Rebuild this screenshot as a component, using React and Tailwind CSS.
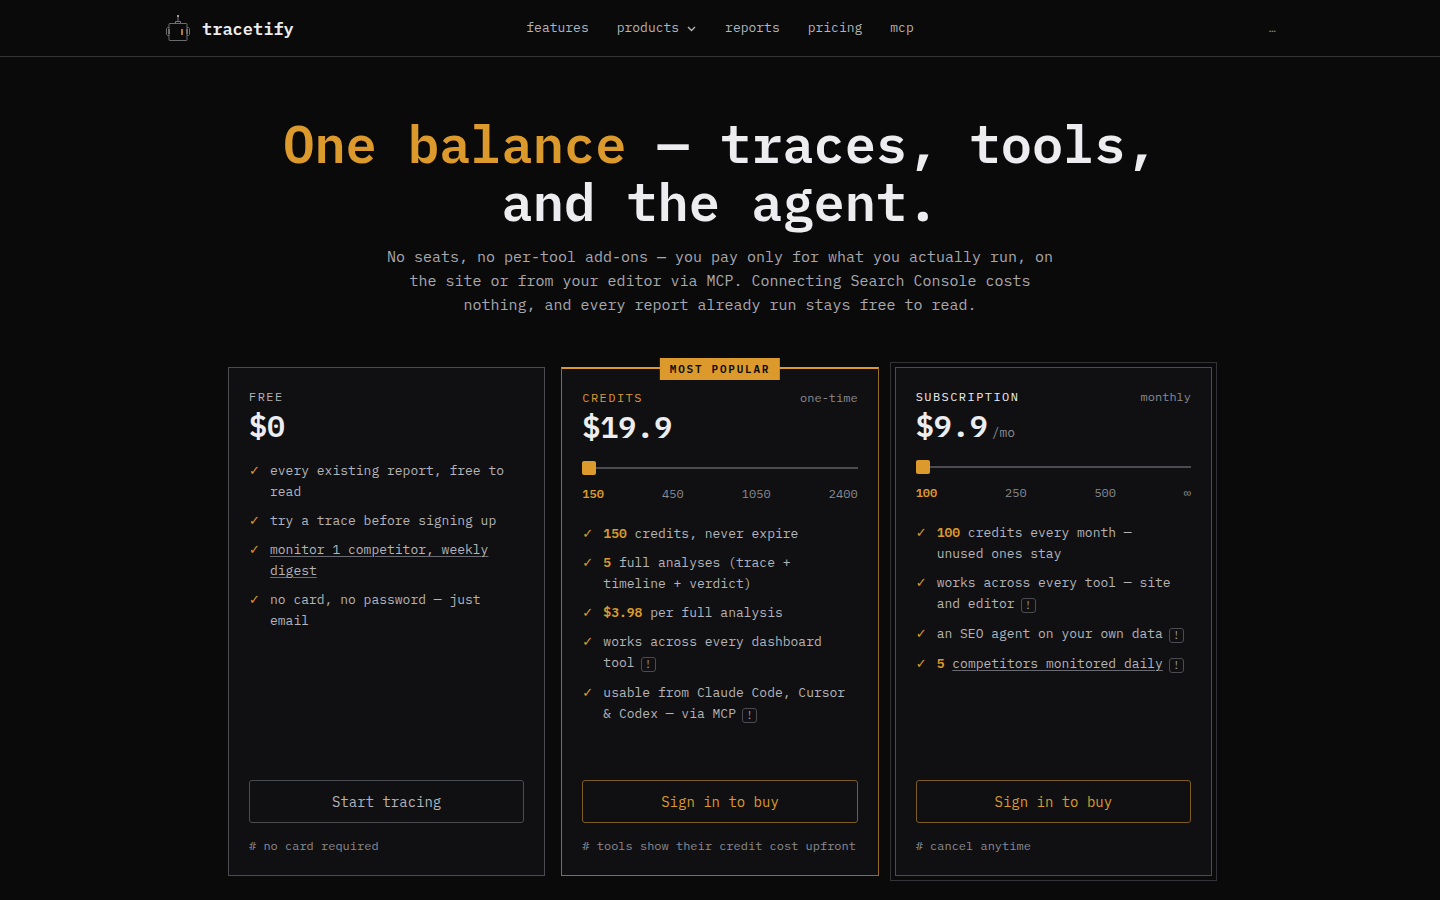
import React from "react";

const navLinks = ["features", "products", "reports", "pricing", "mcp"];

const Amount = ({ children }) => (
  <b className="font-semibold text-[#dc9a2c]">{children}</b>
);

const Info = ({ label }) => (
  <button
    type="button"
    aria-label={label}
    className="mb-0.5 ml-1.5 inline-flex h-[15px] w-[15px] items-center justify-center rounded-[3px] border border-[#4b4b52] align-[-1px] text-[11px] leading-none text-[#9a9aa2]"
  >
    !
  </button>
);

const TextLink = ({ children }) => (
  <a href="#monitor" className="underline decoration-[#6a6a72] decoration-1 underline-offset-2">
    {children}
  </a>
);

const plans = [
  {
    id: "free",
    name: "Free",
    price: "$0",
    features: [
      "every existing report, free to read",
      "try a trace before signing up",
      <TextLink>monitor 1 competitor, weekly digest</TextLink>,
      "no card, no password — just email",
    ],
    cta: "Start tracing",
    note: "# no card required",
    card: "border-[#4b4b50]",
    title: "text-[#b4b4ba]",
    button: "border-[#4b4b52] text-[#b4b4ba]",
  },
  {
    id: "credits",
    name: "Credits",
    billing: "one-time",
    badge: "Most popular",
    price: "$19.9",
    steps: ["150", "450", "1050", "2400"],
    features: [
      <><Amount>150</Amount> credits, never expire</>,
      <><Amount>5</Amount> full analyses (trace + timeline + verdict)</>,
      <><Amount>$3.98</Amount> per full analysis</>,
      <>works across every dashboard tool<Info label="About the tools" /></>,
      <>usable from Claude Code, Cursor &amp; Codex — via MCP<Info label="About MCP" /></>,
    ],
    cta: "Sign in to buy",
    note: "# tools show their credit cost upfront",
    card: "border-[#946b26] border-t-2 border-t-[#dc9a2c]",
    title: "text-[#dc9a2c]",
    button: "border-[#7d5c24] text-[#dc9a2c]",
  },
  {
    id: "subscription",
    name: "Subscription",
    billing: "monthly",
    price: "$9.9",
    unit: "/mo",
    steps: ["100", "250", "500", "∞"],
    features: [
      <><Amount>100</Amount> credits every month —<br />unused ones stay</>,
      <>works across every tool — site and editor<Info label="About the tools" /></>,
      <>an SEO agent on your own data<Info label="About the agent" /></>,
      <><Amount>5</Amount> <TextLink>competitors monitored daily</TextLink><Info label="About monitoring" /></>,
    ],
    cta: "Sign in to buy",
    note: "# cancel anytime",
    card: "border-[#4b4b50] outline outline-offset-4 outline-[#343438]",
    title: "text-[#ededf0]",
    button: "border-[#7d5c24] text-[#dc9a2c]",
  },
];

const Logo = () => (
  <svg width="24" height="28" viewBox="0 0 24 28" fill="none" aria-hidden="true">
    <path d="M12 3v4M9.500 9V7.500h5V9" stroke="#77777b" />
    <rect x="11" y="1" width="2" height="2" fill="#a0a0a4" />
    <rect x="3" y="9.500" width="18" height="17" rx="0.500" stroke="#6c6c70" />
    <path d="M3 13.500H1.500l-1 1v6l1 1H3M21 13.500h1.500l1 1v6l-1 1H21" stroke="#6c6c70" />
    <path d="M3 15v5M21 15v5" stroke="#a0a0a4" />
    <rect x="15" y="15" width="2" height="6" fill="#b07c26" />
  </svg>
);

const Header = () => (
  <header className="border-b border-[#343436]">
    <div className="mx-auto grid h-14 max-w-[1120px] grid-cols-[1fr_auto_1fr] items-center px-1">
      <a href="#home" className="flex items-end gap-3 pl-0.5 text-[17px] leading-[26px] font-semibold text-[#ededf0]">
        <Logo />
        tracetify
      </a>
      <nav className="flex items-center gap-7 text-[13px] text-[#b4b4ba]">
        {navLinks.map((link) =>
          link === "products" ? (
            <button key={link} type="button" className="flex items-center gap-[7px]">
              {link}
              <svg width="11" height="11" viewBox="0 0 11 11" fill="none" stroke="currentColor" strokeWidth="1.4" aria-hidden="true">
                <path d="M2 4l3.500 3.500L9 4" />
              </svg>
            </button>
          ) : (
            <a key={link} href={`#${link}`}>
              {link}
            </a>
          )
        )}
      </nav>
      <span className="justify-self-end text-xs text-[#8a8a92]">…</span>
    </div>
  </header>
);

const AmountSlider = ({ plan }) => {
  const [step, setStep] = React.useState(0);

  return (
    <div className="mt-4">
      <input
        id={`${plan.id}-amount`}
        type="range"
        min="0"
        max={plan.steps.length - 1}
        value={step}
        onChange={(e) => setStep(Number(e.target.value))}
        className="block h-3.5 w-full cursor-pointer appearance-none bg-transparent [&::-webkit-slider-runnable-track]:h-0.5 [&::-webkit-slider-runnable-track]:bg-[#4b4b50] [&::-webkit-slider-thumb]:-mt-1.5 [&::-webkit-slider-thumb]:h-3.5 [&::-webkit-slider-thumb]:w-3.5 [&::-webkit-slider-thumb]:appearance-none [&::-webkit-slider-thumb]:rounded-xs [&::-webkit-slider-thumb]:bg-[#dc9a2c]"
      />
      <label htmlFor={`${plan.id}-amount`} className="mt-2.5 flex justify-between text-xs leading-[18px] text-[#8a8a92]">
        {plan.steps.map((value, i) => (
          <span key={value} className={i === step ? "font-semibold text-[#dc9a2c]" : ""}>
            {value}
          </span>
        ))}
      </label>
    </div>
  );
};

const PlanCard = ({ plan }) => (
  <section className={`relative flex flex-col border bg-[#101012] p-5 ${plan.card}`}>
    {plan.badge && (
      <span className="absolute -top-[11px] left-1/2 -translate-x-1/2 bg-[#dc9a2c] px-2.5 text-[11px] leading-[22px] font-semibold tracking-[0.16em] whitespace-nowrap text-[#0a0a0a] uppercase">
        {plan.badge}
      </span>
    )}
    <div className="flex justify-between text-xs leading-[18px]">
      <h2 className={`tracking-[0.12em] uppercase ${plan.title}`}>{plan.name}</h2>
      <span className="text-[#8a8a92]">{plan.billing}</span>
    </div>
    <p className="mt-0.5 flex items-baseline gap-1 text-[30px] leading-9 font-semibold text-[#ededf0]">
      {plan.price}
      {plan.unit && <span className="text-[13px] leading-none font-normal text-[#8a8a92]">{plan.unit}</span>}
    </p>
    {plan.steps && <AmountSlider plan={plan} />}
    <ul
      className={`mb-[55px] flex flex-1 flex-col gap-2 text-[13px] leading-[21px] text-[#b4b4ba] ${
        plan.steps ? "mt-5" : "mt-4"
      }`}
    >
      {plan.features.map((feature, i) => (
        <li key={i} className="flex gap-2.5">
          <span className="w-[11px] shrink-0 font-['DejaVu_Sans',sans-serif] text-[#dc9a2c]">✓</span>
          <span>{feature}</span>
        </li>
      ))}
    </ul>
    <button type="button" className={`h-[43px] cursor-pointer rounded-[3px] border text-sm ${plan.button}`}>
      {plan.cta}
    </button>
    <p className="mt-3.5 text-xs leading-[18px] text-[#8a8a92]">{plan.note}</p>
  </section>
);

export default function App() {
  return (
    <div className="min-h-screen bg-[#0a0a0a] font-['IBM_Plex_Mono','Liberation_Mono',monospace]">
      <Header />
      <main className="mx-auto max-w-[1024px] px-5 pt-[58px] pb-5">
        <h1 className="text-center text-[52px] leading-[58px] font-semibold text-[#ededf0]">
          <span className="text-[#dc9a2c]">One balance</span> — traces, tools,
          <br />
          and the agent.
        </h1>
        <p className="mx-auto mt-3.5 max-w-[680px] text-center text-[15px] leading-6 text-[#a8a8b0]">
          No seats, no per-tool add-ons — you pay only for what you actually run, on the site or
          from your editor via MCP. Connecting Search Console costs nothing, and every report
          already run stays free to read.
        </p>
        <div className="mt-[50px] grid grid-cols-3 gap-4">
          {plans.map((plan) => (
            <PlanCard key={plan.id} plan={plan} />
          ))}
        </div>
      </main>
    </div>
  );
}
